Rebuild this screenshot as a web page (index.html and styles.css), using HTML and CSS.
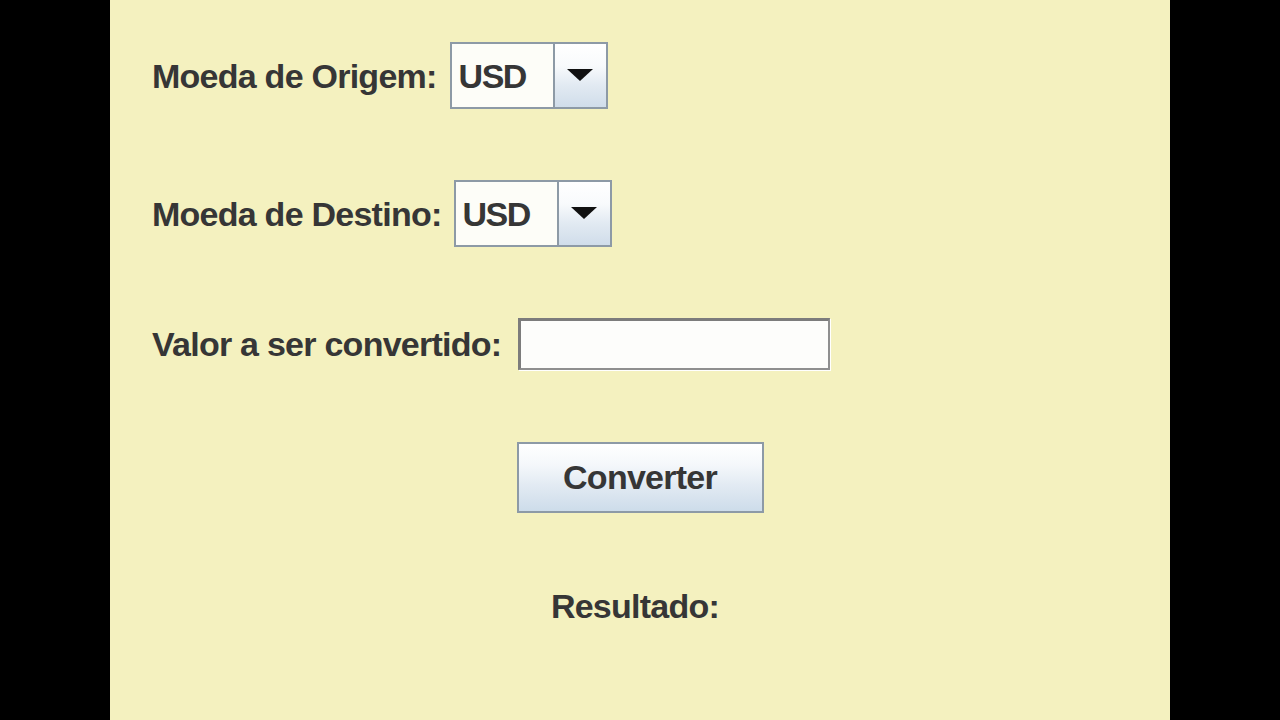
FILE: index.html
```html
<!DOCTYPE html>
<html lang="pt">
<head>
<meta charset="utf-8">
<title>Conversor de Moedas</title>
<link rel="stylesheet" href="styles.css">
</head>
<body>
<div class="frame">
  <main class="panel">
    <div class="row row-origem">
      <span class="label">Moeda de Origem:</span>
      <div class="combo">
        <span class="combo-value">USD</span>
        <span class="combo-btn"><span class="arrow"></span></span>
      </div>
    </div>
    <div class="row row-destino">
      <span class="label">Moeda de Destino:</span>
      <div class="combo">
        <span class="combo-value">USD</span>
        <span class="combo-btn"><span class="arrow"></span></span>
      </div>
    </div>
    <div class="row row-valor">
      <span class="label">Valor a ser convertido:</span>
      <input class="field" type="text" value="">
    </div>
    <div class="center-row btn-row">
      <button class="btn" type="button">Converter</button>
    </div>
    <div class="center-row result-row">
      <span class="label">Resultado:</span>
    </div>
  </main>
</div>
</body>
</html>
```

FILE: styles.css
```css
html, body {
  margin: 0;
  padding: 0;
  background: #000;
  height: 100%;
}

.frame {
  display: flex;
  justify-content: flex-start;
  height: 720px;
  overflow: hidden;
}

.panel {
  margin-left: 110px;
  width: 1060px;
  height: 720px;
  background: #f4f1bf;
  display: flex;
  flex-direction: column;
  box-sizing: border-box;
  padding: 42px 0 0 42px;
  font-family: "Liberation Sans", Arial, sans-serif;
  font-weight: bold;
  font-size: 34px;
  letter-spacing: -0.75px;
  color: #363636;
}

.row {
  display: flex;
  align-items: center;
  gap: 13px;
}

.row-destino {
  margin-top: 71px;
  gap: 12px;
}

.row-valor {
  margin-top: 71px;
  gap: 17px;
}

.label {
  white-space: nowrap;
  line-height: 1;
}

.combo {
  display: flex;
  width: 158px;
  height: 67px;
  box-sizing: border-box;
  border: 2px solid #8d9aa6;
  background: #fdfdf8;
}

.combo-value {
  flex: 1;
  display: flex;
  align-items: center;
  padding-left: 7px;
  line-height: 1;
  letter-spacing: -1.5px;
  border-right: 2px solid #8d9aa6;
}

.combo-btn {
  width: 51px;
  display: flex;
  align-items: center;
  justify-content: center;
  background: linear-gradient(#ffffff 0%, #f8fafc 35%, #e2eaf2 65%, #d0ddea 100%);
}

.arrow {
  width: 0;
  height: 0;
  border-left: 13px solid transparent;
  border-right: 13px solid transparent;
  border-top: 12px solid #111;
  margin-top: -2px;
}

.field {
  width: 312px;
  height: 52px;
  box-sizing: border-box;
  border-style: solid;
  border-width: 3px 2px 2px 3px;
  border-color: #7c7c7c #8f8f8f #8f8f8f #7c7c7c;
  background: #fdfdfb;
  margin: 0;
  padding: 0 6px;
  font: inherit;
  outline: none;
  box-shadow: 1px 1px 0 #ffffff;
}

.center-row {
  display: flex;
  justify-content: center;
  margin-left: -42px;
}

.btn-row {
  margin-top: 72px;
}

.btn {
  width: 247px;
  height: 71px;
  box-sizing: border-box;
  border: 2px solid #8d9aa6;
  background: linear-gradient(#ffffff 0%, #f5f8fb 30%, #e3ebf3 60%, #cddcea 100%);
  font: inherit;
  letter-spacing: -0.75px;
  color: #363636;
  padding: 0;
  margin: 0;
  cursor: pointer;
}

.result-row {
  margin-top: 76px;
  padding-right: 10px;
}
```
